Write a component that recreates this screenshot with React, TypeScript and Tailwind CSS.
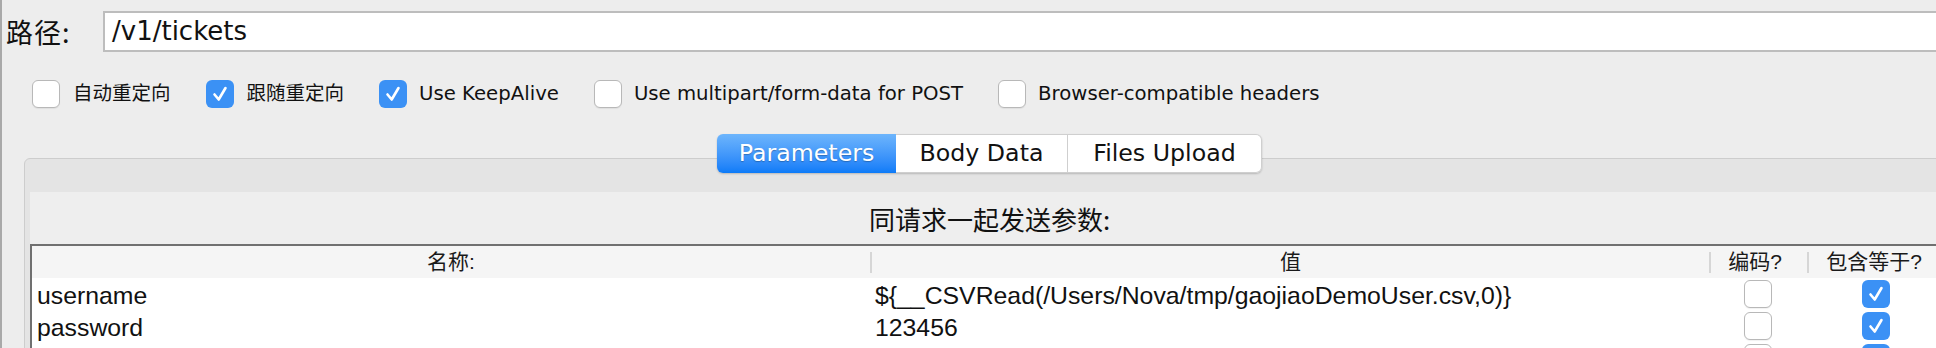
import React from 'react';

const ui = "font-['DejaVu_Sans','Noto_Sans_CJK_SC',sans-serif]";
const cjk = "font-['Noto_Sans_CJK_SC',sans-serif]";
const cell = "font-['Liberation_Sans','Noto_Sans_CJK_SC',sans-serif]";

const Box: React.FC<{ checked?: boolean }> = ({ checked }) =>
  checked ? (
    <span className="flex w-[28px] h-[28px] shrink-0 rounded-[6px] bg-[#3b91f5]">
      <svg viewBox="0 0 28 28" className="w-[28px] h-[28px]">
        <path d="M8.5 14.5l4.2 5L19.5 8" fill="none" stroke="#fff" strokeWidth="2.6" strokeLinecap="round" strokeLinejoin="round" />
      </svg>
    </span>
  ) : (
    <span className="block w-[28px] h-[28px] shrink-0 rounded-[6px] bg-white border border-[#b8b8b8] shadow-[0_1px_1px_rgba(0,0,0,0.06)]" />
  );

const options = [
  { label: '自动重定向', checked: false, zh: true },
  { label: '跟随重定向', checked: true, zh: true },
  { label: 'Use KeepAlive', checked: true },
  { label: 'Use multipart/form-data for POST', checked: false },
  { label: 'Browser-compatible headers', checked: false },
];

const rows = [
  { name: 'username', value: '${__CSVRead(/Users/Nova/tmp/gaojiaoDemoUser.csv,0)}' },
  { name: 'password', value: '123456' },
  { name: '', value: '' },
];

const HeadCell: React.FC<{ text: string; sep?: boolean; pad?: string }> = ({ text, sep, pad = '' }) => (
  <div className={`flex items-center h-full ${pad}`}>
    {sep && <span className="w-[2px] h-[21px] bg-[#d6d6d6] shrink-0" />}
    <span className="flex-1 text-center text-[21px] text-[#1a1a1a]">{text}</span>
  </div>
);

export default function App() {
  return (
    <div className="w-[1936px] h-[348px] overflow-hidden bg-[#ededed] border-l-2 border-[#a9a9a9] text-[#111]">
      <div className="w-[1958px]">
        {/* path row */}
        <div className="flex items-center pt-[11px] pl-[4px]">
          <span className={`w-[97px] text-[27px] leading-none tracking-[1px] ${cjk}`}>路径:</span>
          <div className={`flex-1 h-[41px] flex items-center pl-[7px] bg-white border-2 border-r-0 border-[#bdbdbd] text-[26px] ${ui}`}>
            /v1/tickets
          </div>
        </div>

        {/* options */}
        <div className={`flex items-center gap-[35px] mt-[28px] pl-[30px] h-[28px] ${ui}`}>
          {options.map((o) => (
            <label key={o.label} className={`flex items-center ${o.zh ? 'gap-[13px]' : 'gap-[12px]'}`}>
              <Box checked={o.checked} />
              <span className={o.zh ? 'text-[19.5px]' : 'text-[19.7px]'}>{o.label}</span>
            </label>
          ))}
        </div>

        {/* tabs */}
        <div className={`relative z-10 ml-[22px] w-[1931px] mt-[26px] h-[39px] flex justify-center ${ui}`}>
          <div className="flex h-[39px] rounded-[6px] shadow-[0_1px_2px_rgba(0,0,0,0.2)]">
            <div className="w-[179px] flex items-center justify-center rounded-l-[6px] bg-gradient-to-b from-[#6db5fc] to-[#0b7bf8] text-white text-[23.7px] [text-shadow:0_1px_1px_rgba(0,0,0,0.25)]">
              Parameters
            </div>
            <div className="w-[172px] flex items-center justify-center bg-white border-y border-r border-[#cfcfcf] text-[23.7px]">
              Body Data
            </div>
            <div className="w-[194px] flex items-center justify-center bg-white border-y border-r border-[#cfcfcf] rounded-r-[6px] text-[23.7px]">
              Files Upload
            </div>
          </div>
        </div>

        {/* panel */}
        <div className="ml-[22px] w-[1931px] -mt-[15px] border border-[#cdcdcd] rounded-t-[6px] bg-[#e4e4e4] pt-[33px] px-[5px]">
          <div className="bg-[#eeeeee]">
            <div className={`h-[52px] flex items-center justify-center text-[26px] ${cjk}`}>同请求一起发送参数:</div>

            <div className={`border-t-2 border-l-2 border-[#707070] ${cell}`}>
              <div className="grid grid-cols-[838px_839px_98px_1fr] h-[32px] bg-[#f5f5f5]">
                <HeadCell text="名称:" />
                <HeadCell text="值" sep />
                <HeadCell text="编码?" sep pad="pr-[8px]" />
                <HeadCell text="包含等于?" sep pad="pr-[10px]" />
              </div>
              {rows.map((r, i) => (
                <div key={i} className="grid grid-cols-[838px_839px_98px_1fr] h-[32px] bg-white text-[24.8px] leading-[36px]">
                  <div className="pl-[5px] whitespace-nowrap">{r.name}</div>
                  <div className="pl-[5px] whitespace-nowrap">{r.value}</div>
                  <div className="flex justify-center pt-[2px]">
                    <Box />
                  </div>
                  <div className="flex justify-center pt-[2px] pr-[4px]">
                    <Box checked />
                  </div>
                </div>
              ))}
            </div>
          </div>
        </div>
      </div>
    </div>
  );
}
